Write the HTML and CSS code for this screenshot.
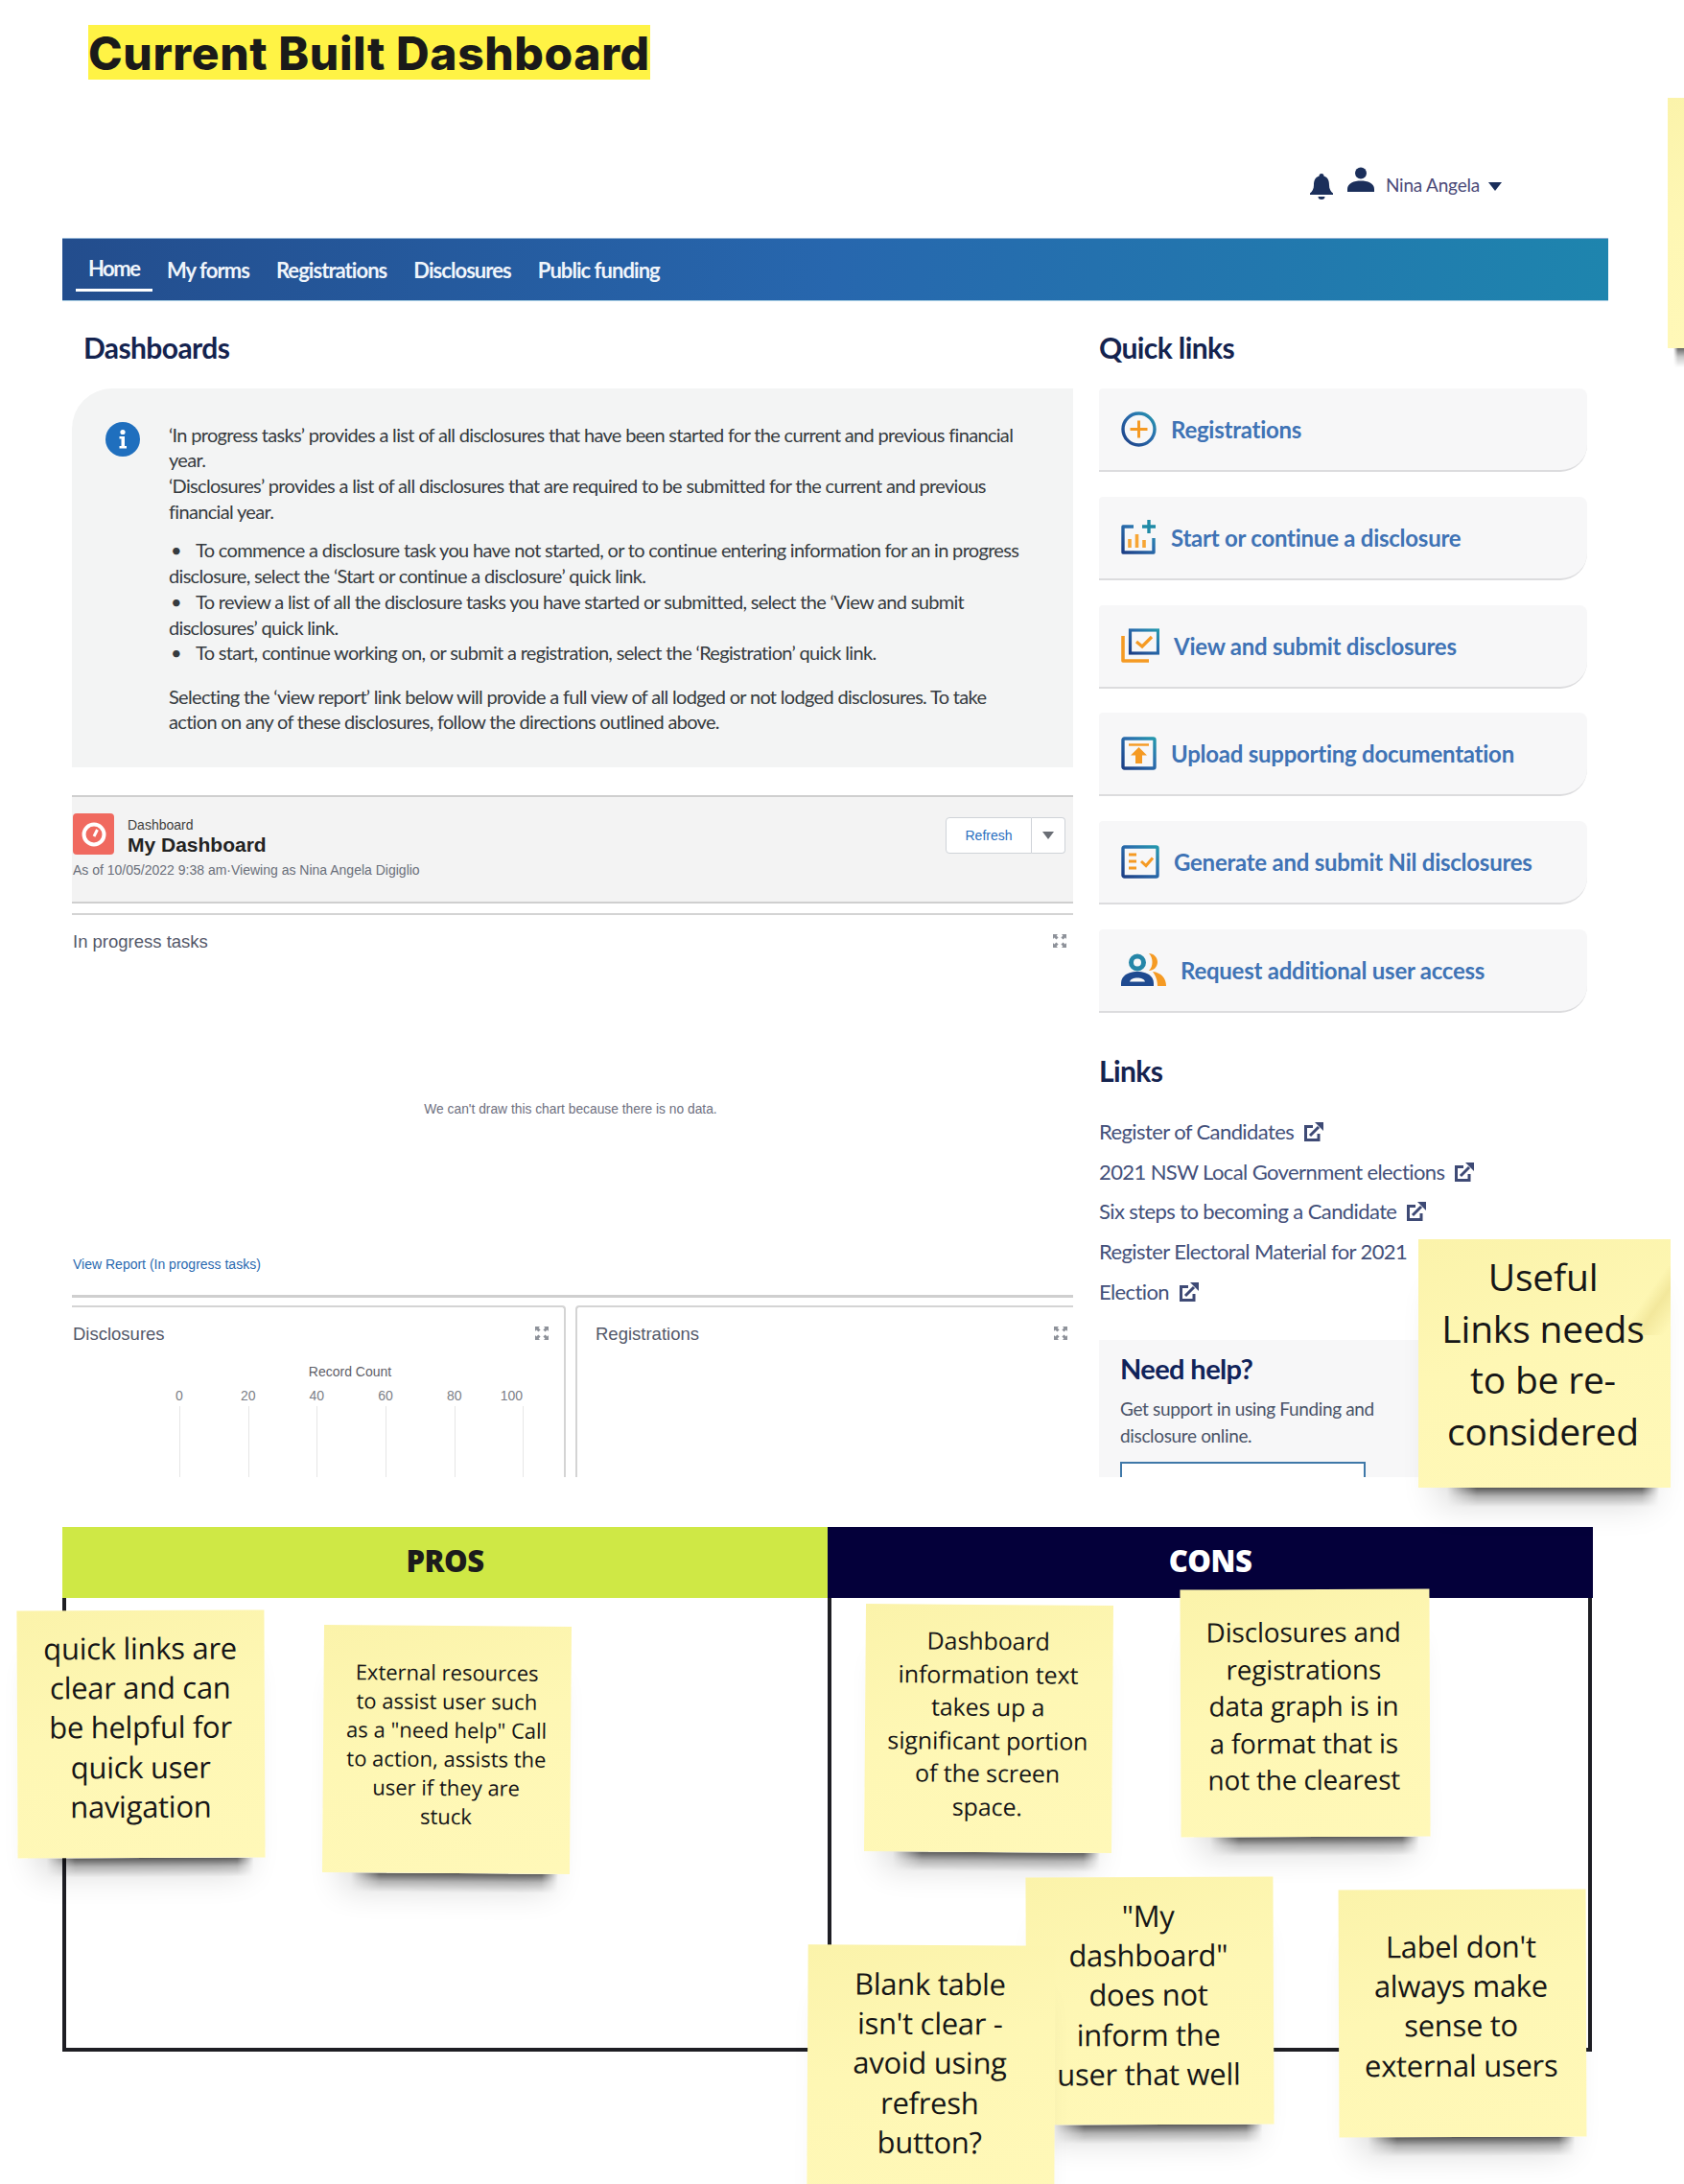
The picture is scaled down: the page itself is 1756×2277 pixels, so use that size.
FILE: index.html
```html
<!DOCTYPE html>
<html lang="en">
<head>
<meta charset="utf-8">
<title>Current Built Dashboard</title>
<link rel="stylesheet" href="styles.css">
</head>
<body>
<svg class="defs" aria-hidden="true">
  <defs>
    <linearGradient id="g" x1="0" y1="1" x2="1" y2="0">
      <stop offset="0" stop-color="#1d3f86"/><stop offset=".6" stop-color="#2a6fae"/><stop offset="1" stop-color="#2497ad"/>
    </linearGradient>
    <symbol id="ext" viewBox="0 0 22 22">
      <path d="M10 5.500H2.500v14H16V13" fill="none" stroke="#3e4a75" stroke-width="3"/>
      <path d="M7 15 L16 6" stroke="#3e4a75" stroke-width="3" fill="none"/>
      <path d="M12 1h9v9z" fill="#3e4a75"/>
    </symbol>
    <symbol id="expand" viewBox="0 0 14 14">
      <path d="M0 0h5L3.600 1.400 5.600 3.400 3.400 5.600 1.400 3.600 0 5zM14 0v5l-1.400-1.400-2 2-2.200-2.200 2-2L9 0zM0 14V9l1.400 1.400 2-2 2.200 2.200-2 2L5 14zM14 14H9l1.400-1.400-2-2 2.200-2.200 2 2L14 9z" fill="#8d9199"/>
    </symbol>
  </defs>
</svg>
<div class="page">
  <header class="title-row"><h1 class="title">Current Built Dashboard</h1></header>

  <section class="screen">
    <div class="topbar">
      <svg class="bell" viewBox="0 0 26 28"><path d="M13 1a2.400 2.400 0 0 1 2.400 2.600C20 5 21 9 21 13c0 4 1.600 6.600 4 8.500V23H1v-1.500C3.400 19.600 5 17 5 13c0-4 1-8 5.600-9.400A2.400 2.400 0 0 1 13 1z" fill="#1b2f5b"/><path d="M9.500 25h7a3.500 3 0 0 1-7 0z" fill="#1b2f5b"/></svg>
      <svg class="person" viewBox="0 0 28 26"><circle cx="14" cy="6.500" r="6" fill="#1b2f5b"/><path d="M0 26v-3c0-6 7-8.500 14-8.500S28 17 28 23v3z" fill="#1b2f5b"/></svg>
      <span class="user">Nina Angela</span>
      <span class="caret"></span>
    </div>
    <nav class="nav">
      <a class="nav-item active">Home</a>
      <a class="nav-item">My forms</a>
      <a class="nav-item">Registrations</a>
      <a class="nav-item">Disclosures</a>
      <a class="nav-item">Public funding</a>
    </nav>
    <div class="columns">
      <div class="left">
        <h2 class="heading">Dashboards</h2>
        <div class="info">
          <svg class="info-icon" viewBox="0 0 36 36"><circle cx="18" cy="18" r="18" fill="#1f6fbe"/><circle cx="18" cy="10.500" r="2.600" fill="#fff"/><path d="M14.500 15h5.500v10h2v2.500h-7.500V25h2v-7.500h-2z" fill="#fff"/></svg>
          <p>‘In progress tasks’ provides a list of all disclosures that have been started for the current and previous financial year.<br>‘Disclosures’ provides a list of all disclosures that are required to be submitted for the current and previous financial year.</p>
          <ul>
            <li>To commence a disclosure task you have not started, or to continue entering information for an in progress disclosure, select the ‘Start or continue a disclosure’ quick link.</li>
            <li>To review a list of all the disclosure tasks you have started or submitted, select the ‘View and submit disclosures’ quick link.</li>
            <li>To start, continue working on, or submit a registration, select the ‘Registration’ quick link.</li>
          </ul>
          <p class="info-last">Selecting the ‘view report’ link below will provide a full view of all lodged or not lodged disclosures. To take action on any of these disclosures, follow the directions outlined above.</p>
        </div>
        <div class="dash-head">
          <div class="dash-row">
            <span class="dash-icon"><svg viewBox="0 0 28 28" width="28" height="28"><circle cx="14" cy="14" r="10.500" fill="none" stroke="#fff" stroke-width="4"/><path d="M14 16l3.500-7" stroke="#fff" stroke-width="3"/></svg></span>
            <div class="dash-titles">
              <div class="dash-kicker">Dashboard</div>
              <div class="dash-name">My Dashboard</div>
            </div>
            <div class="refresh-group"><button class="refresh">Refresh</button><button class="refresh-more"><span></span></button></div>
          </div>
          <div class="dash-meta">As of 10/05/2022 9:38 am·Viewing as Nina Angela Digiglio</div>
        </div>
        <div class="panel-wide">
          <div class="panel-title"><span>In progress tasks</span><svg class="expand"><use href="#expand"/></svg></div>
          <div class="nodata">We can't draw this chart because there is no data.</div>
          <a class="report-link">View Report (In progress tasks)</a>
        </div>
        <div class="panels">
          <div class="panel">
            <div class="panel-title"><span>Disclosures</span><svg class="expand"><use href="#expand"/></svg></div>
            <div class="axis-title">Record Count</div>
            <div class="axis">
              <div class="tick"><span>0</span><i></i></div>
              <div class="tick"><span>20</span><i></i></div>
              <div class="tick"><span>40</span><i></i></div>
              <div class="tick"><span>60</span><i></i></div>
              <div class="tick"><span>80</span><i></i></div>
              <div class="tick"><span>100</span><i></i></div>
            </div>
          </div>
          <div class="panel panel-reg">
            <div class="panel-title"><span>Registrations</span><svg class="expand"><use href="#expand"/></svg></div>
          </div>
        </div>
      </div>
      <aside class="right">
        <h2 class="heading">Quick links</h2>
        <div class="cards">
          <a class="card">
            <svg class="ico w37" viewBox="0 0 37 37"><circle cx="18.500" cy="18.500" r="16.500" fill="none" stroke="url(#g)" stroke-width="3.400"/><path d="M18.500 9.500v18M9.500 18.500h18" stroke="#f59a23" stroke-width="3"/></svg>
            <span>Registrations</span>
          </a>
          <a class="card">
            <svg class="ico w37" viewBox="0 0 37 37"><path d="M13 7H2v27h32V19" fill="none" stroke="url(#g)" stroke-width="3.400" stroke-linejoin="round"/><path d="M29 0v14M22 7h14" stroke="#1f8aa6" stroke-width="3.400"/><path d="M9 20v9M16.500 15v14M24 21v8" stroke="#f7a534" stroke-width="3.600"/></svg>
            <span>Start or continue a disclosure</span>
          </a>
          <a class="card">
            <svg class="ico w40" viewBox="0 0 40 37"><path d="M2 8v26h27" fill="none" stroke="#f59a23" stroke-width="3.600" stroke-linejoin="round"/><rect x="9.500" y="2" width="29" height="24" fill="none" stroke="url(#g)" stroke-width="3.200"/><path d="M16 14l6 5 10-10" fill="none" stroke="#f59a23" stroke-width="3.200"/></svg>
            <span>View and submit disclosures</span>
          </a>
          <a class="card">
            <svg class="ico w37" viewBox="0 0 37 35"><rect x="2" y="2" width="33" height="31" rx="1.500" fill="none" stroke="url(#g)" stroke-width="3.400"/><path d="M8 8.500h21" stroke="#f59a23" stroke-width="2.400"/><path d="M18.500 11l8.500 8.500h-5V28h-7v-8.500h-5z" fill="#f59a23"/></svg>
            <span>Upload supporting documentation</span>
          </a>
          <a class="card">
            <svg class="ico w40" viewBox="0 0 40 35"><rect x="2" y="2" width="36" height="31" rx="1.500" fill="none" stroke="url(#g)" stroke-width="3.400"/><path d="M8 10h8M8 17h8M8 24h8" stroke="#f59a23" stroke-width="2.800"/><path d="M21 17l5 4.500 7-8" fill="none" stroke="#f59a23" stroke-width="3"/></svg>
            <span>Generate and submit Nil disclosures</span>
          </a>
          <a class="card">
            <svg class="ico w47" viewBox="0 0 47 34"><circle cx="17" cy="9.500" r="6.500" fill="none" stroke="#2586a8" stroke-width="5"/><path d="M0 34v-3c0-8 8-12 17-12s17 4 17 12v3z" fill="#1f4a90"/><path d="M9 29.500c1-3 4-4 8-4s7 1 8 4z" fill="#f7f7f8"/><path d="M29 0c5 0 9 4 9 9s-4 9-9 9c2.500-2.500 3.500-5.500 3.500-9S31.500 2.500 29 0z" fill="#f59a23"/><path d="M33 19c8 1 14 6 14 15H38c0-6-2-11-5-15z" fill="#f59a23"/></svg>
            <span>Request additional user access</span>
          </a>
        </div>
        <h2 class="heading links-heading">Links</h2>
        <ul class="links">
          <li>Register of Candidates<svg class="ext"><use href="#ext"/></svg></li>
          <li>2021 NSW Local Government elections<svg class="ext"><use href="#ext"/></svg></li>
          <li>Six steps to becoming a Candidate<svg class="ext"><use href="#ext"/></svg></li>
          <li>Register Electoral Material for 2021<br>Election<svg class="ext"><use href="#ext"/></svg></li>
        </ul>
        <div class="help">
          <h3>Need help?</h3>
          <p>Get support in using Funding and disclosure online.</p>
          <div class="help-btn"></div>
        </div>
      </aside>
    </div>
  </section>

  <section class="matrix">
    <div class="matrix-col pros"><div class="matrix-head">PROS</div><div class="matrix-body"></div></div>
    <div class="matrix-col cons"><div class="matrix-head">CONS</div><div class="matrix-body"></div></div>
  </section>

  <div class="note n-top"></div>
  <div class="note n-useful"><span class="fold"></span>Useful<br>Links needs<br>to be re-<br>considered</div>
  <div class="note n-quick">quick links are<br>clear and can<br>be helpful for<br>quick user<br>navigation</div>
  <div class="note n-external">External resources<br>to assist user such<br>as a "need help" Call<br>to action, assists the<br>user if they are<br>stuck</div>
  <div class="note n-dash">Dashboard<br>information text<br>takes up a<br>significant portion<br>of the screen<br>space.</div>
  <div class="note n-discl">Disclosures and<br>registrations<br>data graph is in<br>a format that is<br>not the clearest</div>
  <div class="note n-my">"My<br>dashboard"<br>does not<br>inform the<br>user that well</div>
  <div class="note n-blank">Blank table<br>isn't clear -<br>avoid using<br>refresh<br>button?</div>
  <div class="note n-label">Label don't<br>always make<br>sense to<br>external users</div>
</div>
</body>
</html>
```
FILE: styles.css
```css
* { box-sizing: border-box; }
html, body { margin: 0; padding: 0; background: #fff; }
body { font-family: "Lato", "Liberation Sans", sans-serif; color: #33383f; }
.defs { position: absolute; width: 0; height: 0; }
.page { position: relative; width: 1756px; height: 2277px; overflow: hidden; }

/* title */
.title-row { padding: 26px 0 0 92px; height: 83px; }
.title {
  display: inline-block; margin: 0; height: 57px; line-height: 60px; background: #fff345;
  font-family: "Inter", sans-serif; font-weight: 800; font-size: 48px; letter-spacing: 0.6px; color: #1a1a1a; white-space: nowrap;
}

/* app screenshot */
.screen { width: 1612px; height: 1457px; margin-left: 65px; overflow: hidden; }
.topbar { height: 165px; padding: 90px 111px 0 0; display: flex; justify-content: flex-end; align-items: flex-start; }
.bell { width: 26px; height: 28px; margin: 7px 14px 0 0; }
.person { width: 28px; height: 26px; margin: 1px 12px 0 0; }
.user { font-size: 19px; line-height: 40px; letter-spacing: -0.2px; color: #4b4a78; }
.caret { width: 0; height: 0; margin: 17px 0 0 9px; border: 7px solid transparent; border-top: 9px solid #1b2f5b; border-bottom: 0; }

.nav {
  height: 66px; padding-left: 14px; display: flex;
  background: linear-gradient(95deg, #234d8d 0%, #2767ae 50%, #1e85ae 100%);
  border-top: 1px solid #8fb0d3; border-bottom: 1px solid #a9cfe4;
}
.nav-item { padding: 0 14px; font-size: 22px; font-weight: 700; letter-spacing: -0.95px; line-height: 65px; color: #f0f5fb; height: 55px; }
.nav-item.active { padding: 0 13px; line-height: 61px; margin-right: 1px; letter-spacing: -1.5px; border-bottom: 3px solid #fff; width: 80px; }

.columns { display: flex; gap: 27px; padding-left: 10px; }
.left { width: 1044px; flex: none; }
.right { width: 511px; flex: none; }
.heading { margin: 30px 0 25px; height: 36px; line-height: 36px; font-size: 30px; font-weight: 700; letter-spacing: -0.6px; color: #14234f; }
.left .heading { margin-left: 12px; }

/* info */
.info { position: relative; height: 395px; padding: 34.500px 40px 0 101px; background: #f3f4f4; border-top-left-radius: 42px; font-size: 20px; line-height: 26.800px; letter-spacing: -0.68px; color: #363b3f; }
.info p { margin: 0; }
.info ul { margin: 13.500px 0 0; padding: 0; list-style: none; }
.info li::before { content: "•"; display: inline-block; width: 26px; padding-left: 2px; }
.info-last { padding-top: 18.500px; }
.info-icon { position: absolute; left: 35px; top: 35px; width: 36px; height: 36px; }

/* dashboard header */
.dash-head { margin-top: 29px; height: 113px; padding: 17px 8px 0 1px; background: #f3f3f3; border-top: 2px solid #cfcfcf; border-bottom: 2px solid #cfcfcf; font-family: "Liberation Sans", Arial, sans-serif; }
.dash-row { display: flex; align-items: flex-start; }
.dash-icon { width: 43px; height: 43px; border-radius: 4px; background: #f0695f; display: flex; align-items: center; justify-content: center; flex: none; }
.dash-titles { margin-left: 14px; flex: 1; }
.dash-kicker { font-size: 14px; line-height: 16px; margin-top: 4px; color: #3e3e3c; }
.dash-name { font-size: 21px; line-height: 25px; font-weight: 700; color: #222; }
.dash-meta { font-size: 14px; line-height: 18px; margin-top: 5px; color: #6a6f7a; }
.refresh-group { display: flex; margin-top: 4px; }
.refresh { width: 90px; height: 38px; border: 1px solid #cfd3d8; border-radius: 4px 0 0 4px; background: #fff; color: #2a6fc0; font: 14px "Liberation Sans", Arial, sans-serif; padding: 0; }
.refresh-more { width: 35px; height: 38px; border: 1px solid #cfd3d8; border-left: 0; border-radius: 0 4px 4px 0; background: #fff; padding: 0; display: flex; align-items: center; justify-content: center; }
.refresh-more span { width: 0; height: 0; border: 6px solid transparent; border-top: 8px solid #6a6e75; border-bottom: 0; }

/* panels */
.panel-wide { position: relative; margin-top: 10px; height: 401px; border-top: 2px solid #d4d4d4; border-bottom: 3px solid #cfcfcf; padding: 0 1px; font-family: "Liberation Sans", Arial, sans-serif; display: flex; flex-direction: column; }
.panel-title { display: flex; justify-content: space-between; font-size: 18.500px; line-height: 22px; padding-top: 17px; color: #54586a; }
.expand { width: 14px; height: 14px; margin: 3px 6px 0 0; }
.nodata { margin-top: 155px; padding-right: 4px; text-align: center; font-size: 13.800px; line-height: 18px; color: #6e7080; }
.report-link { margin-top: auto; margin-bottom: 23px; font-size: 14px; line-height: 18px; color: #2a6ab0; }
.panels { display: grid; grid-template-columns: 515px 519px; gap: 10px; margin-top: 8px; height: 200px; font-family: "Liberation Sans", Arial, sans-serif; }
.panel { border-top: 2px solid #d4d4d4; border-right: 2px solid #d4d4d4; border-top-right-radius: 4px; padding-left: 1px; padding-right: 10px; }
.panel-reg { border-right: 0; border-left: 2px solid #d4d4d4; border-top-right-radius: 0; border-top-left-radius: 4px; padding-left: 19px; padding-right: 0; }
.axis-title { margin: 19px 0 0 209px; width: 160px; text-align: center; font-size: 14px; line-height: 18px; color: #5e6068; }
.axis { display: flex; margin: 7px 0 0 111px; }
.tick { width: 71.700px; flex: none; position: relative; }
.tick span { display: block; width: 40px; margin-left: -20px; text-align: center; font-size: 14px; line-height: 18px; color: #7b7e86; }
.tick:last-child span { margin-left: -32px; }
.tick i { display: block; width: 1px; height: 90px; margin-top: 2px; background: #e6e6e6; }

/* right column */
.cards { display: flex; flex-direction: column; gap: 25.800px; }
.card { height: 87px; margin-right: 2px; padding-left: 23px; display: flex; align-items: center; gap: 15px; background: #f7f7f8; border-radius: 4px 8px 28px 0; border-bottom: 2px solid #dcdcde; font-size: 24px; font-weight: 700; letter-spacing: -0.25px; color: #3f73b5; }
.ico { height: 37px; flex: none; }
.w37 { width: 37px; }
.w40 { width: 40px; }
.w47 { width: 47px; height: 34px; }
.links-heading { margin: 42px 0 25px; }
.links { margin: 0; padding: 0; list-style: none; font-size: 22px; line-height: 41.700px; letter-spacing: -0.6px; color: #43507a; }
.ext { width: 22px; height: 22px; margin-left: 10px; vertical-align: -3px; }
.help { margin-top: 29px; height: 200px; padding: 12px 0 0 22px; background: #f7f7f8; }
.help h3 { margin: 0; font-size: 29px; line-height: 36px; font-weight: 700; letter-spacing: -0.6px; color: #10235a; }
.help p { margin: 10px 0 0; width: 300px; font-size: 19px; line-height: 28px; letter-spacing: -0.35px; color: #4a5368; }
.help-btn { width: 256px; height: 60px; margin-top: 13px; background: #fff; border: 2px solid #3f78a8; }

/* pros / cons */
.matrix { position: absolute; left: 65px; top: 1592px; width: 1596px; height: 547px; display: grid; grid-template-columns: 798px 798px; }
.matrix-col { display: flex; flex-direction: column; }
.matrix-head { height: 74px; line-height: 70px; text-align: center; font-family: "Open Sans", sans-serif; font-weight: 800; font-size: 31px; letter-spacing: -0.5px; }
.matrix-body { flex: 1; border-bottom: 4px solid #1e1e24; }
.pros .matrix-head { background: #cfe845; color: #1c1c1c; }
.pros .matrix-body { border-left: 4px solid #1e1e24; }
.cons .matrix-head { background: #04003a; color: #fff; }
.cons .matrix-body { border-left: 4px solid #1e1e24; border-right: 4px solid #1e1e24; margin-right: 1px; }

/* sticky notes */
.note {
  position: absolute; width: 258px; height: 258px; padding-right: 3px; text-align: center; color: #161616;
  font-family: "Open Sans", sans-serif; font-size: 31px; line-height: 41.200px; letter-spacing: -0.3px;
  background: linear-gradient(165deg, #fbf3aa 0%, #fef7b4 45%, #fff8b8 100%);
  box-shadow: 0 36px 34px -20px rgba(0,0,0,.16);
}
.note::after {
  content: ""; position: absolute; top: 100%; left: 30px; right: 12px; height: 20px;
  background: linear-gradient(rgba(0,0,0,.6), rgba(0,0,0,.22) 45%, rgba(0,0,0,0));
  -webkit-mask-image: linear-gradient(90deg, transparent, #000 14%, #000 92%, transparent);
  mask-image: linear-gradient(90deg, transparent, #000 14%, #000 92%, transparent);
}
.n-top { left: 1739px; top: 102px; width: 40px; height: 261px; }
.n-top::after { left: 6px; right: 0; }
.n-useful { left: 1479px; top: 1292px; width: 263px; height: 259px; padding-top: 12px; font-size: 39px; line-height: 53.500px; letter-spacing: -0.2px; isolation: isolate; }
.fold { position: absolute; z-index: -1; right: 0; top: 28px; width: 42px; height: 72px; background: linear-gradient(125deg, rgba(240,228,150,0) 42%, rgba(240,228,150,.8) 62%, rgba(240,228,150,0) 92%); }
.n-quick { left: 18px; top: 1679px; transform: rotate(-.25deg); padding-top: 19px; padding-right: 1px; }
.n-external { left: 337px; top: 1695px; transform: rotate(.45deg); padding-top: 33px; padding-right: 1px; font-size: 22px; line-height: 30px; letter-spacing: 0; }
.n-dash { left: 902px; top: 1673px; transform: rotate(.45deg); padding-top: 20px; padding-right: 2px; font-size: 25px; line-height: 34.500px; letter-spacing: -0.1px; }
.n-discl { left: 1231px; top: 1657px; width: 260px; transform: rotate(-.25deg); padding-top: 25px; font-size: 28px; line-height: 38.500px; letter-spacing: -0.2px; }
.n-my { left: 1070px; top: 1957px; transform: rotate(-.25deg); padding-top: 20px; }
.n-blank { left: 842px; top: 2028px; transform: rotate(.3deg); padding-top: 20px; }
.n-label { left: 1396px; top: 1970px; transform: rotate(-.2deg); padding-top: 39px; }
```
